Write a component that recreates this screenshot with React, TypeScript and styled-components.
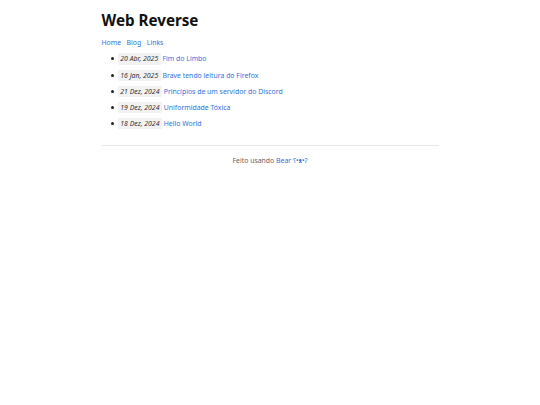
import styled, { createGlobalStyle } from "styled-components";

const posts = [
  { date: "20 Abr, 2025", title: "Fim do Limbo" },
  { date: "16 Jan, 2025", title: "Brave tendo leitura do Firefox" },
  { date: "21 Dez, 2024", title: "Princípios de um servidor do Discord" },
  { date: "19 Dez, 2024", title: "Uniformidade Tóxica" },
  { date: "18 Dez, 2024", title: "Hello World" },
];

export default function App() {
  return (
    <>
      <GlobalStyle />
      <Page>
        <Header>
          <Title>Web Reverse</Title>
          <Nav>
            <NavLink href="#">Home</NavLink>
            <NavLink href="#">Blog</NavLink>
            <NavLink href="#">Links</NavLink>
          </Nav>
        </Header>
        <main>
          <PostList>
            {posts.map((post) => (
              <PostItem key={post.title}>
                <DateTag>{post.date}</DateTag>
                <PostLink href="#">{post.title}</PostLink>
              </PostItem>
            ))}
          </PostList>
        </main>
        <Footer>
          Feito usando <FooterLink href="#">Bear ʕ•ᴥ•ʔ</FooterLink>
        </Footer>
      </Page>
    </>
  );
}

const GlobalStyle = createGlobalStyle`
  body {
    margin: 0;
    background: #ffffff;
    font-family: "Noto Sans", "Open Sans", sans-serif;
    color: #444444;
  }
`;

const Page = styled.div`
  width: 337px;
  margin: 0 auto;
  padding-top: 9px;
  font-size: 6.9px;
  line-height: 1.5;
`;

const Header = styled.header`
  display: flex;
  flex-direction: column;
`;

const Title = styled.h1`
  margin: 0;
  font-size: 15.2px;
  font-weight: 700;
  line-height: 22px;
  color: #111111;
`;

const Nav = styled.nav`
  display: flex;
  gap: 5.5px;
  margin-top: 7px;
`;

const NavLink = styled.a`
  color: #3273dc;
  text-decoration: none;
`;

const PostList = styled.ul`
  list-style: none;
  margin: 5px 0 0;
  padding-left: 9px;
  display: flex;
  flex-direction: column;
  gap: 5px;
`;

const PostItem = styled.li`
  display: flex;
  align-items: center;
  color: #222222;
  line-height: 11.2px;

  &::before {
    content: "";
    width: 3px;
    height: 3px;
    border-radius: 50%;
    background: #222222;
    margin-right: 4.5px;
    flex-shrink: 0;
  }
`;

const DateTag = styled.i`
  background: #f2f2f2;
  color: #333333;
  padding: 0 2.3px;
  margin-right: 2px;
  border-radius: 1px;
  font-size: 6.9px;
`;

const PostLink = styled.a`
  color: #3273dc;
  text-decoration: none;
`;

const Footer = styled.footer`
  margin-top: 16px;
  border-top: 1px solid #e8e8e8;
  padding-top: 10px;
  text-align: center;
  color: #666666;
`;

const FooterLink = styled.a`
  color: #3273dc;
  text-decoration: none;
`;
